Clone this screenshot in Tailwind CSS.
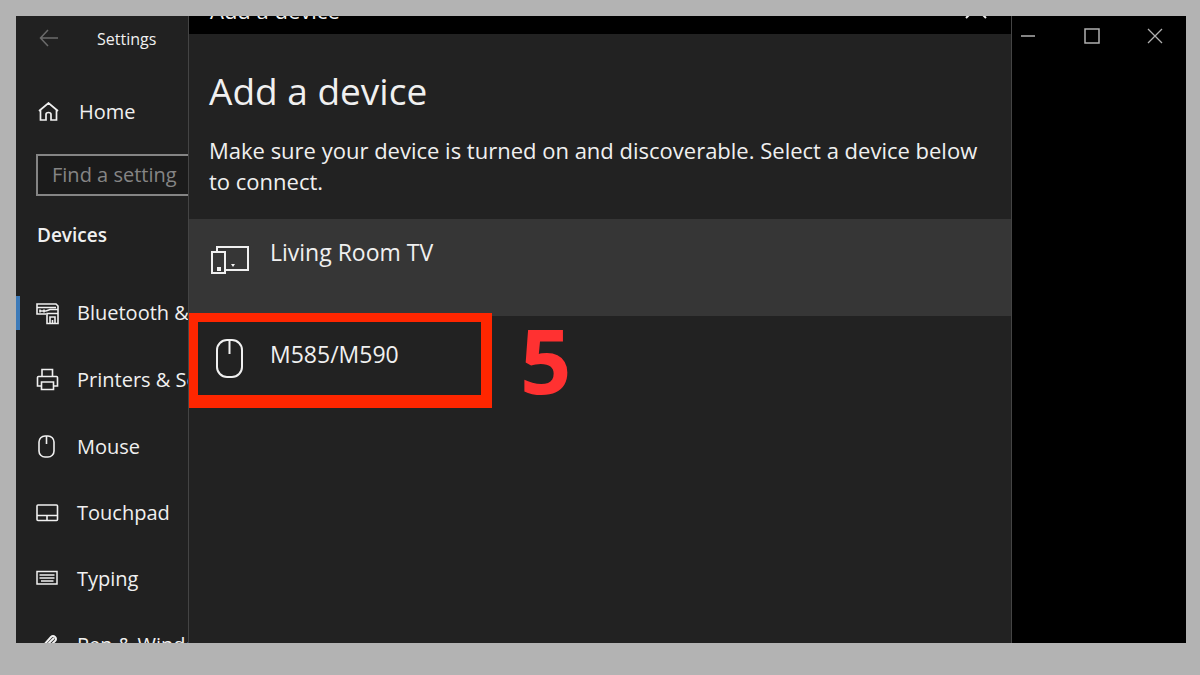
<!DOCTYPE html>
<html lang="en">
    <head>
        <meta charset="UTF-8" />
        <meta name="viewport" content="width=device-width, initial-scale=1.0" />
        <title>Add a device</title>
        <script src="https://cdn.jsdelivr.net/npm/@tailwindcss/browser@4"></script>
    </head>
    <body class="bg-[#b3b3b3] font-['Open_Sans',sans-serif] text-[#f0f0f0]">
        <div class="flex h-screen pt-4 pr-[14px] pb-8 pl-4">
            <div class="flex flex-1 overflow-hidden bg-black">
                <!-- Settings sidebar -->
                <aside class="w-[172px] shrink-0 overflow-hidden bg-[#212121] text-[20px] whitespace-nowrap">
                    <div class="flex h-[46px] items-center gap-[38px] pl-[23px]">
                        <button aria-label="Back" class="text-[#6b6b6b]">
                            <svg class="size-5" viewBox="0 0 20 20" fill="none" stroke="currentColor" stroke-width="1.500">
                                <path d="M19 9H1.500M9 1L1.500 9L9 17" />
                            </svg>
                        </button>
                        <h2 class="text-[16px]">Settings</h2>
                    </div>
                    <a href="#" class="mt-6 flex h-[52px] items-center gap-5 pl-[22px]">
                        <svg class="size-[21px] shrink-0" viewBox="0 0 21 21" fill="none" stroke="currentColor" stroke-width="1.700">
                            <path d="M1 9L10.500 1L20 9M2.500 8V18H8V12.500Q8 10.500 10.500 10.500Q13 10.500 13 12.500V18H18.500V8" />
                        </svg>
                        Home
                    </a>
                    <input
                        type="text"
                        aria-label="Find a setting"
                        placeholder="Find a setting"
                        class="mt-4 ml-5 h-[42px] w-60 border-2 border-[#858585] bg-[#1b1b1b] px-[14px] pb-[2px] placeholder:text-[#858585]"
                    />
                    <h3 class="mt-6 pl-[21px] text-[19px] leading-[30px] font-semibold">Devices</h3>
                    <nav class="mt-[30px]">
                        <a href="#" class="relative flex h-[66px] items-center gap-[18px] pl-5">
                            <span class="absolute left-0 h-[34px] w-1 bg-[#3d7ab8]"></span>
                            <svg class="size-[23px] shrink-0" viewBox="0 0 23 23" fill="none" stroke="currentColor" stroke-width="1.600">
                                <path d="M10 12H1V2H20L22 4V8M1 5.500H20M4 9H10M4 7.500V10.500M8 7.500V10.500M10 9L14 7.500H22V21.500H11V11.500H22M14 21V15H19V21M16.500 18V21" />
                            </svg>
                            Bluetooth &amp; other devices
                        </a>
                        <a href="#" class="flex h-[67px] items-center gap-[18px] pl-5">
                            <svg class="size-[23px] shrink-0" viewBox="0 0 23 23" fill="none" stroke="currentColor" stroke-width="1.600">
                                <path d="M6 8V1.500H16.500V8M5.500 18H1.500V9.500Q1.500 8.500 2.500 8.500H20.500Q21.500 8.500 21.500 9.500V18H17.500M5.500 14H17.500V21.500H5.500Z" />
                            </svg>
                            Printers &amp; Scanners
                        </a>
                        <a href="#" class="flex h-[67px] items-center gap-[18px] pl-5">
                            <svg class="size-[23px] shrink-0" viewBox="0 0 23 23" fill="none" stroke="currentColor" stroke-width="1.600">
                                <rect x="3" y="1" width="15" height="21" rx="6" />
                                <path d="M10.500 1V9" />
                            </svg>
                            Mouse
                        </a>
                        <a href="#" class="flex h-[66px] items-center gap-[18px] pl-5">
                            <svg class="size-[23px] shrink-0" viewBox="0 0 23 23" fill="none" stroke="currentColor" stroke-width="1.600">
                                <rect x="1" y="3" width="20.500" height="15.500" rx="1" />
                                <path d="M1 13.500H21.500M11 13.500V18.500" />
                            </svg>
                            Touchpad
                        </a>
                        <a href="#" class="flex h-[66px] items-center gap-[18px] pl-5">
                            <svg class="size-[23px] shrink-0" viewBox="0 0 23 23" fill="none" stroke="currentColor" stroke-width="1.500">
                                <rect x="1" y="3.500" width="20" height="12.500" />
                                <path d="M3.500 7H18.500M3.500 10H18.500M5 13H17.500" />
                            </svg>
                            Typing
                        </a>
                        <a href="#" class="flex h-[66px] items-center gap-[18px] pl-5">
                            <svg class="size-[23px] shrink-0" viewBox="0 0 23 23" fill="none" stroke="currentColor" stroke-width="2">
                                <path d="M7 12L15 3Q17 1 19 3Q21 5 19 7L11 15L5 17ZM11 11L18 4M17 9L22 13" />
                            </svg>
                            Pen &amp; Windows Ink
                        </a>
                    </nav>
                </aside>

                <!-- Dialog -->
                <main class="flex min-w-0 flex-1 flex-col border-x border-[#444444] bg-[#222222] text-[22px]">
                    <div class="flex h-[18px] shrink-0 items-end justify-between overflow-hidden bg-black pr-6 pl-[21px]">
                        <span class="pb-[9px] leading-[30px]">Add a device</span>
                        <button aria-label="Close dialog" class="pb-[15px]">
                            <svg class="size-[22px]" viewBox="0 0 22 22" fill="none" stroke="currentColor" stroke-width="2">
                                <path d="M1 1L21 21M21 1L1 21" />
                            </svg>
                        </button>
                    </div>
                    <div class="px-5 pt-[31px]">
                        <h1 class="text-[37px] leading-[52px]">Add a device</h1>
                        <p class="mt-[18px] leading-[31px]">
                            Make sure your device is turned on and discoverable. Select a device below to connect.
                        </p>
                    </div>
                    <div class="relative mt-[22px] text-[23px]">
                        <button class="flex h-[97px] w-full items-start gap-[19px] bg-[#363636] pt-[18px] pl-[22px] text-left">
                            <svg class="mt-2 h-8 w-10" viewBox="0 0 40 32" fill="none" stroke="currentColor" stroke-width="2">
                                <path d="M6 7V2H37V25H15" />
                                <rect x="1" y="7" width="13" height="21" />
                                <path d="M6 22H10V26H6ZM20 19H24L22 22Z" fill="currentColor" stroke="none" />
                            </svg>
                            <span class="leading-[30px]">Living Room TV</span>
                        </button>
                        <button class="flex h-[97px] w-full items-start gap-[19px] pt-[23px] pl-[22px] text-left">
                            <svg class="h-10 w-10" viewBox="0 0 40 40" fill="none" stroke="currentColor" stroke-width="2">
                                <rect x="6" y="1" width="25" height="37" rx="10" />
                                <path d="M18.500 1V15" />
                            </svg>
                            <span class="leading-[30px]">M585/M590</span>
                        </button>
                        <!-- Step marker -->
                        <div class="absolute top-[94px] left-0 flex items-start gap-7">
                            <div class="h-[95px] w-[303px] border-t-[9px] border-r-[11px] border-b-[13px] border-l-[9px] border-[#ff2600]"></div>
                            <span class="text-[90px] leading-[92px] font-bold text-[#ff3131]">5</span>
                        </div>
                    </div>
                </main>

                <!-- Window buttons -->
                <div class="flex h-10 w-[174px] shrink-0 items-center justify-between pr-[23px] pl-2 text-[#b0b0b0]">
                    <button aria-label="Minimize">
                        <svg class="size-4" viewBox="0 0 16 16" fill="none" stroke="currentColor" stroke-width="1.500">
                            <path d="M1 8H15" />
                        </svg>
                    </button>
                    <button aria-label="Maximize">
                        <svg class="size-4" viewBox="0 0 16 16" fill="none" stroke="currentColor" stroke-width="1.500">
                            <rect x="1" y="1" width="14" height="14" />
                        </svg>
                    </button>
                    <button aria-label="Close">
                        <svg class="size-4" viewBox="0 0 16 16" fill="none" stroke="currentColor" stroke-width="1.300">
                            <path d="M1 1L15 15M15 1L1 15" />
                        </svg>
                    </button>
                </div>
            </div>
        </div>
    </body>
</html>
